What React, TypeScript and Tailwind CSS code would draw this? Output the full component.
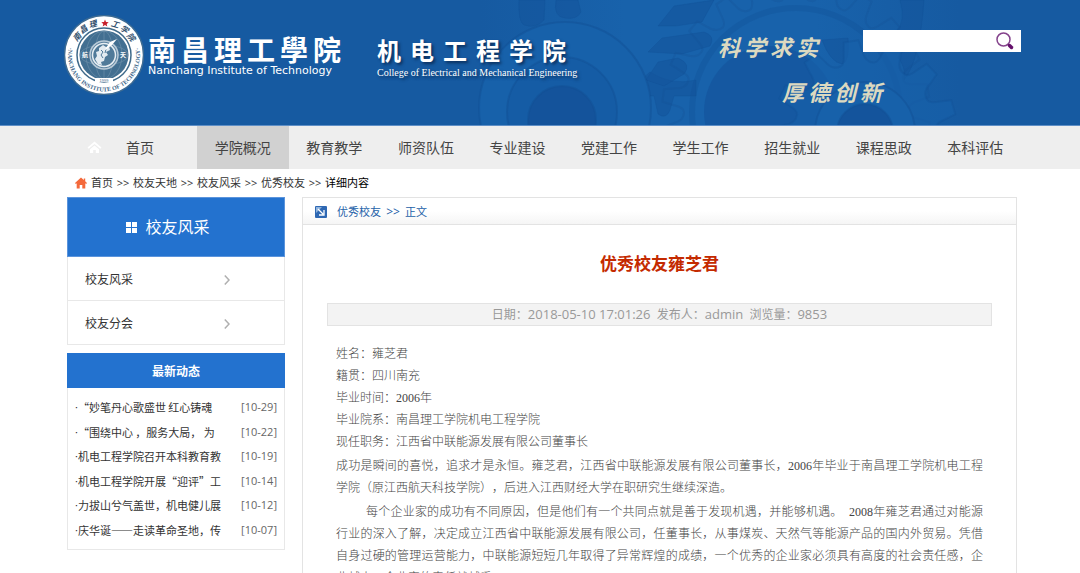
const navItems = ['学院概况', '教育教学', '师资队伍', '专业建设', '党建工作', '学生工作', '招生就业', '课程思政', '本科评估']

const crumbs = ['首页', '校友天地', '校友风采', '优秀校友']

const news = [
  { title: '“妙笔丹心歌盛世 红心铸魂', date: '[10-29]' },
  { title: '“围绕中心 ，服务大局， 为', date: '[10-22]' },
  { title: '机电工程学院召开本科教育教', date: '[10-19]' },
  { title: '机电工程学院开展“迎评”工', date: '[10-14]' },
  { title: '力拔山兮气盖世，机电健儿展', date: '[10-12]' },
  { title: '庆华诞——走读革命圣地，传', date: '[10-07]' },
]

const profile = [
  '姓名：雍芝君',
  '籍贯：四川南充',
  '毕业时间：2006年',
  '毕业院系：南昌理工学院机电工程学院',
  '现任职务：江西省中联能源发展有限公司董事长',
]

// Outline of a cog with rounded-off trapezoid teeth
function gearPath(cx: number, cy: number, inner: number, outer: number, teeth: number) {
  const step = (Math.PI * 2) / teeth
  const pt = (r: number, a: number) => `${(cx + r * Math.cos(a)).toFixed(1)} ${(cy + r * Math.sin(a)).toFixed(1)}`
  let d = `M${pt(inner, 0)}`
  for (let i = 0; i < teeth; i++) {
    const a = i * step
    d += `Q${pt(inner, a + step * 0.14)} ${pt((inner + outer) / 2, a + step * 0.2)}`
    d += `L${pt(outer, a + step * 0.27)}L${pt(outer, a + step * 0.6)}`
    d += `L${pt((inner + outer) / 2, a + step * 0.68)}Q${pt(inner, a + step * 0.74)} ${pt(inner, a + step)}`
  }
  return d + 'Z'
}

function Gears() {
  return (
    <svg className="absolute inset-0 h-full w-full" viewBox="0 0 1080 125" preserveAspectRatio="xMidYMin slice" aria-hidden="true">
      <defs>
        <linearGradient id="haze" x1="0" x2="1">
          <stop offset="0" stopColor="#1862ab" stopOpacity="0" />
          <stop offset="0.3" stopColor="#1862ab" />
          <stop offset="0.7" stopColor="#1862ab" />
          <stop offset="1" stopColor="#1862ab" stopOpacity="0" />
        </linearGradient>
      </defs>
      <rect x="480" width="480" height="125" fill="url(#haze)" />
      <g fill="#14559d" fillOpacity="0.6" stroke="#124f94" strokeOpacity="0.3">
        <path d="M519 0h26l-1 20q-8 9-20 5-6-3-5-25zM556 0h22l3 12q-4 8-16 6-12-1-9-18z" />
        <path d="M600 100q12-4 16 8l6 12q10 6 14-4l2-20h16l4 18q8 6 12-4l4-14h22v-16q-24 6-46-8-20 20-50 28z" />
        <path d="M676 26l26-4 12-22-40 6-16 20zM662 38l42-6q12 4 6 14l-28 8-34-2zM658 62l20-4q14 6 6 16l-20 12-18-6z" />
        <path d="M822 40q8 22 20 24 8-2 6-26zM900 0q6 22-4 32 8 14 2 26 8 8 6 22 16-20 20-80z" />
      </g>
      <g fill="none" stroke="#124f94" strokeOpacity="0.45" strokeWidth="2">
        <circle cx="565" cy="108" r="86" fill="#1761aa" />
        <circle cx="562" cy="112" r="55" fill="#1458a1" fillOpacity="0.6" />
        <circle cx="562" cy="120" r="34" fill="#14539b" />
        <path d={gearPath(796, 112, 112, 134, 22)} strokeOpacity="0.25" />
        <circle cx="796" cy="112" r="104" strokeWidth="6" strokeOpacity="0.3" />
        <circle cx="770" cy="112" r="66" fill="#14549c" fillOpacity="0.7" stroke="none" />
        <path d={gearPath(865, 132, 70, 92, 13)} fill="#1761aa" fillOpacity="0.6" strokeOpacity="0.3" />
        <circle cx="865" cy="132" r="50" fill="#1761aa" />
        <circle cx="865" cy="132" r="28" fill="#14549c" />
      </g>
    </svg>
  )
}

function Crest() {
  return (
    <svg className="h-20 w-20 shrink-0" viewBox="0 0 80 80" role="img" aria-label="南昌理工学院校徽">
      <defs>
        <path id="crest-bottom" d="M5 32a36 36 0 1 0 70 0" />
      </defs>
      <circle cx="40" cy="40" r="39.5" fill="#fff" stroke="#3d6b93" strokeWidth="1.5" />
      <circle cx="40" cy="40" r="27" fill="none" stroke="#3f6a8a" strokeWidth="1.5" />
      <circle cx="40" cy="40" r="24.5" fill="#426f91" />
      <g fill="none" stroke="#7899b0" strokeWidth="0.5">
        <ellipse cx="40" cy="40" rx="9" ry="24" />
        <ellipse cx="40" cy="40" rx="18" ry="24" />
        <ellipse cx="40" cy="40" rx="24" ry="10" />
        <path d="M16 40h48M40 16v48" />
      </g>
      <circle cx="40" cy="40" r="14" fill="#5d84a1" stroke="#b9cad7" strokeWidth="1.5" />
      <circle cx="40" cy="40" r="11.5" fill="#507a99" stroke="#e7eef3" strokeWidth="1.5" />
      <path d="M35 33l4-3 3 2 3-1 1 4-4 2 2 3-3 2-1 4-3 1 1 3-4-1-3-5 2-3-1-4 3-1z" fill="#e3ebf1" />
      <path d="M37 35l2 2-2 3 2 3M42 34l-1 4M45 46l3-4-1 5-6 3z" fill="none" stroke="#507a99" />
      <path d="M53 24l-7 3-6 9 8-6z" fill="#fff" />
      <path d="M41 4.500l1 2.500 2.700.2-2 1.700.6 2.600-2.300-1.400-2.300 1.400.6-2.600-2-1.700L40 7z" fill="#c8202b" />
      <g fontFamily="Noto Sans CJK SC, sans-serif" fill="#31506d" fontWeight="700">
        <text fontSize="6" x="18" y="42" fill="#fff">航</text>
        <text fontSize="6" x="56" y="42" fill="#fff">天</text>
        <g fontSize="8" fontStyle="italic">
          <text x="9" y="25" transform="rotate(-50 13 22)">南</text>
          <text x="16" y="17" transform="rotate(-35 20 15)">昌</text>
          <text x="25" y="12" transform="rotate(-16 29 10)">理</text>
          <text x="47" y="12" transform="rotate(16 50 10)">工</text>
          <text x="56" y="17" transform="rotate(35 60 15)">学</text>
          <text x="63" y="25" transform="rotate(50 67 22)">院</text>
        </g>
      </g>
      <text fontSize="6" fontFamily="Liberation Serif, serif" fontWeight="700" fill="#3d668a">
        <textPath href="#crest-bottom" startOffset="50%" textAnchor="middle">·NANCHANG INSTITUTE OF TECHNOLOGY·</textPath>
      </text>
      <path d="M31 63h18v4H31z" fill="#fff" />
      <text x="40" y="67" fontSize="4" textAnchor="middle" fontFamily="Liberation Sans, sans-serif" fill="#3d668a">1999</text>
    </svg>
  )
}

function Spread({ text, className }: { text: string; className: string }) {
  return (
    <span className={`flex ${className}`}>
      {[...text].map((char, i) => (
        <span key={i}>{char}</span>
      ))}
    </span>
  )
}

function Header() {
  return (
    <header className="relative border-b border-[#5f8fc6] bg-[#165aa1] text-white">
      <Gears />
      <div className="relative flex h-[125px] items-start pr-[59px] pl-16 pt-[15px]">
        <Crest />
        <div className="ml-1 pt-5 whitespace-nowrap">
          <Spread text="南昌理工學院" className="gap-[5px] text-[28px] leading-[30px] font-bold" />
          <p className="font-['DejaVu_Sans',sans-serif] text-[11px] leading-3">Nanchang Institute of Technology</p>
        </div>
        <div className="ml-9 pt-5 whitespace-nowrap [text-shadow:2px_2px_3px_#0b2f5c]">
          <Spread text="机电工程学院" className="gap-[9px] text-2xl leading-[32px] font-bold" />
          <p className="font-['Liberation_Serif',serif] text-[10px] leading-3">
            College of Electrical and Mechanical Engineering
          </p>
        </div>
        <div className="ml-auto w-[303px] shrink-0 text-[#dcd9c0]">
          <div className="flex items-start justify-between">
            <Spread text="科学求实" className="gap-1 pt-4 text-[22px] leading-[32px] font-bold italic" />
            <form className="mt-[15px] flex h-[22px] w-[158px] bg-white" onSubmit={(e) => e.preventDefault()}>
              <input type="text" aria-label="搜索" className="min-w-0 flex-1 bg-transparent px-1 text-xs text-black outline-none" />
              <button type="submit" aria-label="搜索" className="mr-1.5 w-5">
                <svg className="h-5 w-5" viewBox="0 0 20 20" fill="none">
                  <circle cx="8.500" cy="8.500" r="6.500" stroke="#85438c" strokeWidth="1.5" />
                  <path d="M13 13l1.500 1.500" stroke="#85438c" strokeWidth="2" />
                  <path d="M14.500 14.500l2 2" stroke="#640f6b" strokeWidth="3.5" strokeLinecap="round" />
                </svg>
              </button>
            </form>
          </div>
          <Spread text="厚德创新" className="gap-1 pt-3 pl-16 text-[22px] leading-[34px] font-bold italic" />
        </div>
      </div>
    </header>
  )
}

function Nav() {
  return (
    <nav className="flex h-[43px] bg-[#eeeeee] pr-[59px] pl-[67px] text-sm text-[#444]">
      <a href="#" className="flex w-[130px] shrink-0 items-center gap-6 pl-5">
        <svg className="h-[15px] w-[15px]" viewBox="0 0 15 15" fill="#fff">
          <path d="M7.500 1.500L.5 7.500l1.200 1.300 5.800-4.900 5.800 4.900 1.200-1.300z" />
          <path d="M7.500 5.500L3 9.300V13h3.200v-3h2.600v3H12V9.300z" />
        </svg>
        首页
      </a>
      {navItems.map((item, i) => (
        <a
          key={item}
          href="#"
          className={`flex flex-1 items-center justify-center whitespace-nowrap ${i === 0 ? 'bg-[#d1d1d1]' : ''}`}
        >
          {item}
        </a>
      ))}
    </nav>
  )
}

function Breadcrumb() {
  return (
    <div className="flex h-7 items-center pl-[75px] text-[11px] text-[#333]">
      <svg className="mr-1 h-3 w-3" viewBox="0 0 12 12" fill="#f4693b">
        <path d="M6 .5L0 6l.8.9.9-.7V11.500H4.700V8h2.600v3.500h3V6.200l.9.700L12 6l-1.800-1.700V1.500H8.800v1.600z" />
      </svg>
      {crumbs.map((crumb) => (
        <span key={crumb} className="flex">
          <a href="#">{crumb}</a>
          <span className="w-5 text-center">&gt;&gt;</span>
        </span>
      ))}
      <span className="text-black">详细内容</span>
    </div>
  )
}

function Sidebar() {
  return (
    <aside className="w-[218px] shrink-0">
      <h2 className="flex h-[60px] items-center justify-center gap-2 border border-[#5b94dc] bg-[#2372cf] pr-4 text-base text-white">
        <svg className="h-[11px] w-[11px]" viewBox="0 0 11 11" fill="#fff">
          <path d="M0 0h5v5H0zM6 0h5v5H6zM0 6h5v5H0zM6 6h5v5H6z" />
        </svg>
        校友风采
      </h2>
      <ul className="border-x border-[#e8e8e8] text-xs text-[#333]">
        {['校友风采', '校友分会'].map((item) => (
          <li key={item} className="border-b border-[#e8e8e8]">
            <a href="#" className="flex h-[43px] items-center justify-between pt-0.5 pr-[54px] pl-[17px]">
              {item}
              <svg className="h-2.5 w-1.5" viewBox="0 0 6 10" fill="none" stroke="#b0b0b0" strokeWidth="1.5">
                <path d="M.8.500L5 5 .8 9.500" />
              </svg>
            </a>
          </li>
        ))}
      </ul>

      <h2 className="mt-2 flex h-[35px] items-center justify-center bg-[#2372cf] pt-0.5 text-xs font-bold text-white">
        最新动态
      </h2>
      <ul className="grid h-[162px] auto-rows-fr border border-t-0 border-[#e8e8e8] p-[7px] text-[11px] text-[#333]">
        {news.map((item) => (
          <li key={item.date} className="flex items-center justify-between">
            <span className="flex whitespace-nowrap">
              ·
              <a href="#" className="font-['Noto_Sans_CJK_SC',sans-serif]">
                {item.title}
              </a>
            </span>
            <span className="text-[#666]">{item.date}</span>
          </li>
        ))}
      </ul>
    </aside>
  )
}

function Article() {
  return (
    <article className="min-w-0 flex-1 border border-[#e3e3e3]">
      <div className="flex h-[27px] items-center border-b border-[#e3e3e3] bg-linear-to-b from-white from-50% to-[#f5f5f5] pt-0.5 pl-3 text-[11px] text-[#2461a8]">
        <svg className="mr-2.5 h-3 w-3" viewBox="0 0 12 12">
          <rect width="12" height="12" rx="1" fill="#2f68b3" />
          <path d="M1 1h6L1 7z" fill="#8fb3dd" />
          <path d="M3 3l5 5M9 4v5H4" fill="none" stroke="#fff" strokeWidth="1.300" />
        </svg>
        <a href="#">优秀校友</a>
        <span className="w-6 text-center text-xs">&gt;&gt;</span>
        <span>正文</span>
      </div>
      <h1 className="pt-6 text-center text-[17px] leading-[30px] font-bold text-[#c42a00]">优秀校友雍芝君</h1>
      <p className="mx-6 mt-6 border border-[#e3e3e3] bg-[#f3f3f3] text-center text-xs leading-[21px] text-[#999]">
        日期：<span className="text-[13px]">2018-05-10 17:01:26</span>&nbsp; 发布人：<span className="text-[13px]">admin</span>
        &nbsp; 浏览量：<span className="text-[13px]">9853</span>
      </p>
      <div className="flex flex-col gap-0.5 px-[33px] pt-[17px] pb-10 text-justify font-['Liberation_Serif','Noto_Sans_CJK_SC',serif] text-xs leading-[22px] font-light text-[#444]">
        <div>
          {profile.map((line) => (
            <p key={line}>{line}</p>
          ))}
        </div>
        <p>
          成功是瞬间的喜悦，追求才是永恒。雍芝君，江西省中联能源发展有限公司董事长，2006年毕业于南昌理工学院机电工程学院（原江西航天科技学院），后进入江西财经大学在职研究生继续深造。
        </p>
        <p className="indent-[30px]">
          每个企业家的成功有不同原因，但是他们有一个共同点就是善于发现机遇，并能够机遇。&nbsp; 2008年雍芝君通过对能源行业的深入了解，决定成立江西省中联能源发展有限公司，任董事长，从事煤炭、天然气等能源产品的国内外贸易。凭借自身过硬的管理运营能力，中联能源短短几年取得了异常辉煌的成绩，一个优秀的企业家必须具有高度的社会责任感，企业越大，企业家的责任就越重
        </p>
      </div>
    </article>
  )
}

export default function App() {
  return (
    <div lang="zh-CN" className="min-h-screen bg-white font-['Open_Sans','Noto_Sans_CJK_SC',sans-serif] [text-spacing-trim:space-all]">
      <Header />
      <Nav />
      <Breadcrumb />
      <main className="flex items-start gap-[17px] pr-[63px] pl-[67px]">
        <Sidebar />
        <Article />
      </main>
    </div>
  )
}
